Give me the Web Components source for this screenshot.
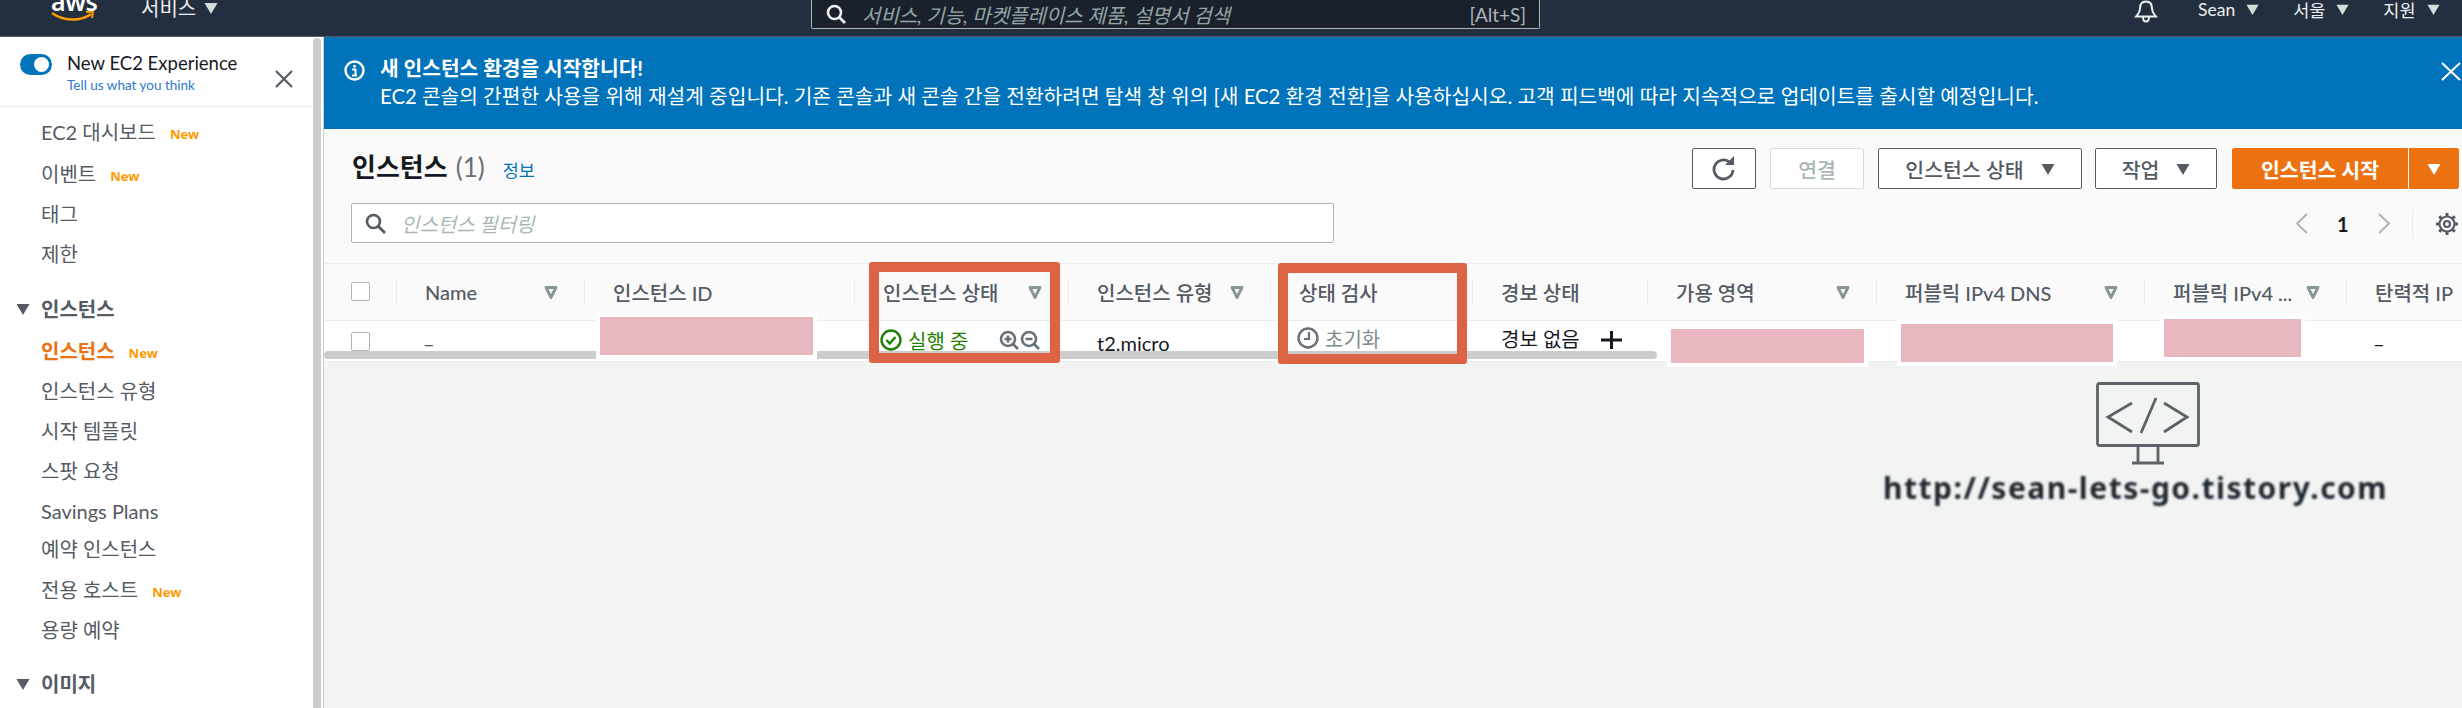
<!DOCTYPE html>
<html lang="ko">
<head>
<meta charset="utf-8">
<title>EC2 인스턴스</title>
<style>
html, body { margin: 0; padding: 0; }
body {
    width: 2462px;
    height: 708px;
    overflow: hidden;
    font-family: Lato, "Noto Sans CJK KR", sans-serif;
    font-size: 20px;
    color: #16191f;
    background: #f2f3f3;
}
.page { display: flex; align-items: stretch; height: 671px; }
</style>
</head>
<body>
<top-bar></top-bar>
<div class="page">
    <side-nav>
        <side-item badge="New">EC2 대시보드</side-item>
        <side-item badge="New" style="margin-top:2px">이벤트</side-item>
        <side-item>태그</side-item>
        <side-item>제한</side-item>
        <side-group style="margin-top:14px">인스턴스</side-group>
        <side-item active badge="New">인스턴스</side-item>
        <side-item>인스턴스 유형</side-item>
        <side-item>시작 템플릿</side-item>
        <side-item>스팟 요청</side-item>
        <side-item style="margin-top:1px">Savings Plans</side-item>
        <side-item style="margin-top:-3px">예약 인스턴스</side-item>
        <side-item badge="New" style="margin-top:1px">전용 호스트</side-item>
        <side-item>용량 예약</side-item>
        <side-group style="margin-top:13px">이미지</side-group>
    </side-nav>
    <main-area>
        <flash-banner></flash-banner>
        <instance-panel></instance-panel>
    </main-area>
</div>
<page-markup></page-markup>

<script>
const CARET = (size, color) => `<svg width="${size}" height="${size}" viewBox="0 0 14 14"><path d="M0.5 2h13L7 13z" fill="${color}"/></svg>`;
const SORT = `<svg width="14" height="15" viewBox="0 0 14 15"><path d="M2 2.500h10L7 12.500z" fill="#f2f3f3" stroke="#879596" stroke-width="2.800" stroke-linejoin="round"/></svg>`;

// small helper, all of the elements here are static markup
function defineStatic(name, html) {
    const tpl = document.createElement('template');
    tpl.innerHTML = html;
    customElements.define(name, class extends HTMLElement {
        constructor() {
            super();
            this.attachShadow({mode: 'open'}).append(tpl.content.cloneNode(true));
        }
    });
}

defineStatic('top-bar', `
<style>
:host { display: block; height: 37px; box-sizing: border-box; background: #232f3e; border-bottom: 1px solid #545b64; overflow: hidden; color: #fff; }
#bar { display: flex; align-items: flex-start; height: 36px; position: relative; }
#left { display: flex; width: 811px; flex: none; }
#logo { margin-left: 51px; width: 43px; height: 36px; position: relative; flex: none; }
#logo span { display: block; font: 600 25px/25px "Noto Sans", sans-serif; margin-top: -11px; letter-spacing: -0.5px; }
#logo svg { position: absolute; left: 0; top: 11px; }
#services { margin-left: 47px; display: flex; align-items: center; gap: 8px; height: 15px; font-size: 20px; color: #eee; }
#search { width: 729px; height: 29px; box-sizing: border-box; background: #1a212c; border: 1px solid #aab7b8; border-top: none; border-radius: 0 0 2px 2px; display: flex; align-items: center; padding: 0 13px 0 14px; flex: none; }
#search svg { margin-right: 16px; flex: none; }
#search i { color: #95a5a6; font-size: 20px; flex: 1; white-space: nowrap; }
#search b { color: #aab7b8; font-weight: 400; font-size: 19px; }
#right { position: absolute; left: 2134px; top: 0; display: flex; align-items: center; height: 19px; font-size: 17.500px; color: #eee; }
.menu { display: flex; align-items: center; gap: 11px; white-space: nowrap; }
</style>
<div id="bar">
    <div id="left">
        <div id="logo"><span>aws</span>
            <svg width="44" height="12" viewBox="0 0 44 12"><path d="M1 2c11 8 28 9 39 1" fill="none" stroke="#f90" stroke-width="2.400"/><path d="M35 1l7-.5-1 6.500" fill="none" stroke="#f90" stroke-width="2"/></svg>
        </div>
        <div id="services">서비스 ${CARET(14, '#d5dbdb')}</div>
    </div>
    <div id="search">
        <svg width="20" height="20" viewBox="0 0 20 20"><circle cx="8.500" cy="8.500" r="6.500" fill="none" stroke="#eee" stroke-width="2.600"/><path d="M13 13l6 6" stroke="#eee" stroke-width="2.800"/></svg>
        <i>서비스, 기능, 마켓플레이스 제품, 설명서 검색</i>
        <b>[Alt+S]</b>
    </div>
    <div id="right">
        <svg width="24" height="23" viewBox="0 0 24 23" style="margin-top:3px"><path d="M12 1.500c-4 0-6 3-6 7 0 4-2 5.500-4 8h20c-2-2.500-4-4-4-8 0-4-2-7-6-7z M9 17c0 6 6 6 6 0" fill="none" stroke="#eee" stroke-width="2"/></svg>
        <div class="menu" style="margin-left:40px">Sean ${CARET(13, '#d5dbdb')}</div>
        <div class="menu" style="margin-left:34px">서울 ${CARET(13, '#d5dbdb')}</div>
        <div class="menu" style="margin-left:34px">지원 ${CARET(13, '#d5dbdb')}</div>
    </div>
</div>`);

defineStatic('side-nav', `
<style>
:host { display: block; width: 324px; flex: none; box-sizing: border-box; background: #fff; border-right: 1px solid #c9d1d2; position: relative; overflow: hidden; }
#head { height: 69px; border-bottom: 1px solid #eaeded; display: flex; position: relative; box-sizing: content-box; }
#toggle { width: 32px; height: 21px; border-radius: 11px; background: #0073bb; margin: 17px 0 0 20px; position: relative; flex: none; }
#toggle::after { content: ""; position: absolute; right: 3px; top: 3px; width: 15px; height: 15px; border-radius: 50%; background: #fff; }
#label { margin: 14px 0 0 15px; }
#label div { font-size: 18.500px; line-height: 24px; color: #16191f; white-space: nowrap; }
#label a { display: block; font-size: 13.500px; line-height: 18px; margin-top: 1px; color: #2e78c7; white-space: nowrap; }
#close { position: absolute; left: 275px; top: 33px; }
#list { padding: 4px 0 0 0; }
#bar { position: absolute; left: 313px; top: 1px; bottom: 0; width: 8px; border-radius: 4px 4px 0 0; background: #cccccc; }
</style>
<div id="head">
    <div id="toggle"></div>
    <div id="label"><div>New EC2 Experience</div><a>Tell us what you think</a></div>
    <svg id="close" width="18" height="18" viewBox="0 0 18 18"><path d="M1 1l16 16M17 1L1 17" stroke="#545b64" stroke-width="2.200"/></svg>
</div>
<div id="list"><slot></slot></div>
<div id="bar"></div>`);

class SideItem extends HTMLElement {
    constructor() {
        super();
        const badge = this.getAttribute('badge');
        this.attachShadow({mode: 'open'}).innerHTML = `
<style>
:host { display: flex; align-items: center; height: 40px; padding-left: 41px; font-size: 20px; color: #545b64; white-space: nowrap; }
:host([active]) { color: #ec7211; font-weight: 700; }
#badge { margin: 5px 0 0 14px; font: 700 13px "Noto Sans", sans-serif; color: #ff9900; }
</style>
<slot></slot>${badge ? `<span id="badge">${badge}</span>` : ''}`;
    }
}
customElements.define('side-item', SideItem);

defineStatic('side-group', `
<style>
:host { display: flex; align-items: center; height: 43px; padding-left: 16px; gap: 11px; font-size: 20px; font-weight: 700; color: #545b64; }
</style>
${CARET(14, '#545b64')}<slot></slot>`);

defineStatic('main-area', `
<style>
:host { display: block; flex: 1; min-width: 0; position: relative; }
</style>
<slot></slot>`);

defineStatic('flash-banner', `
<style>
:host { display: block; height: 92px; background: #0073bb; color: #fff; position: relative; overflow: hidden; }
#wrap { display: flex; padding: 17px 0 0 20px; gap: 15px; }
#text { font-size: 20.300px; line-height: 28px; white-space: nowrap; }
#text b { display: block; font-weight: 700; }
#close { position: absolute; left: 2117px; top: 25px; }
</style>
<div id="wrap">
    <svg width="21" height="21" viewBox="0 0 21 21" style="flex:none;margin-top:6px"><circle cx="10.500" cy="10.500" r="9" fill="none" stroke="#fff" stroke-width="2.400"/><circle cx="10.500" cy="6.300" r="1.500" fill="#fff"/><path d="M8 9.500h3.500v5.500M8 15.500h5" fill="none" stroke="#fff" stroke-width="2"/></svg>
    <div id="text"><b>새 인스턴스 환경을 시작합니다!</b>EC2 콘솔의 간편한 사용을 위해 재설계 중입니다. 기존 콘솔과 새 콘솔 간을 전환하려면 탐색 창 위의 [새 EC2 환경 전환]을 사용하십시오. 고객 피드백에 따라 지속적으로 업데이트를 출시할 예정입니다.</div>
</div>
<svg id="close" width="21" height="19" viewBox="0 0 21 19"><path d="M1 1l18 17M19 1L1 18" stroke="#fff" stroke-width="2"/></svg>`);

defineStatic('action-button', `
<style>
:host { display: flex; align-items: center; justify-content: center; box-sizing: border-box; height: 41px; gap: 17px; border: 1px solid #545b64; border-radius: 2px; background: #fff; color: #545b64; font-size: 20.500px; font-weight: 500; white-space: nowrap; flex: none; }
:host([disabled]) { border-color: #d5dbdb; color: #aab7b8; }
:host([primary]) { background: #ec7211; border-color: #ec7211; color: #fff; font-weight: 700; }
</style>
<slot></slot>`);

defineStatic('instance-panel', `
<style>
:host { display: block; background: #fafafa; position: relative; }
#head { height: 135px; box-sizing: border-box; position: relative; border-bottom: 1px solid #eaeded; }
#title { position: absolute; left: 28px; top: 18px; display: flex; align-items: baseline; white-space: nowrap; }
#title b { font-size: 26px; font-weight: 700; color: #16191f; }
#title span { font-size: 26px; color: #687078; margin-left: 8px; }
#title a { font-size: 17.500px; color: #0073bb; margin-left: 18px; }
#actions { display: flex; position: absolute; left: 1368px; top: 19px; }
#filter { position: absolute; left: 27px; top: 74px; width: 983px; height: 40px; box-sizing: border-box; background: #fff; border: 1px solid #aab7b8; border-radius: 2px; display: flex; align-items: center; padding-left: 13px; gap: 15px; }
#filter i { color: #aab7b8; font-size: 20px; }
#pager { position: absolute; left: 1971px; top: 84px; height: 21px; display: flex; align-items: center; font-size: 20px; font-weight: 700; }
#sep { width: 1px; height: 30px; background: #eaeded; margin: 0 24px 0 21px; }
</style>
<div id="head">
    <div id="title"><b>인스턴스</b><span>(1)</span><a>정보</a></div>
    <div id="actions">
        <action-button style="width:64px"><svg width="26" height="25" viewBox="0 0 26 25"><path d="M19 6.500A9.500 9.500 0 1 0 22 14" fill="none" stroke="#545b64" stroke-width="2.800"/><path d="M14 9h9V0z" fill="#545b64"/></svg></action-button>
        <action-button disabled style="width:94px;margin-left:14px">연결</action-button>
        <action-button style="width:204px;margin-left:14px">인스턴스 상태 ${CARET(14, '#545b64')}</action-button>
        <action-button style="width:122px;margin-left:13px">작업 ${CARET(14, '#545b64')}</action-button>
        <action-button primary style="width:176px;margin-left:15px;border-radius:2px 0 0 2px">인스턴스 시작</action-button>
        <action-button primary style="width:50px;margin-left:1px;border-radius:0 2px 2px 0">${CARET(14, '#fff')}</action-button>
    </div>
    <div id="filter">
        <svg width="21" height="21" viewBox="0 0 21 21"><circle cx="8.500" cy="8.500" r="6.500" fill="none" stroke="#545b64" stroke-width="2.600"/><path d="M13 13l7 7" stroke="#545b64" stroke-width="2.800"/></svg>
        <i>인스턴스 필터링</i>
    </div>
    <div id="pager">
        <svg width="14" height="21" viewBox="0 0 14 21"><path d="M12 1L2 10.500 12 20" fill="none" stroke="#aab7b8" stroke-width="2"/></svg>
        <span style="margin:0 28px">1</span>
        <svg width="14" height="21" viewBox="0 0 14 21"><path d="M2 1l10 9.500L2 20" fill="none" stroke="#aab7b8" stroke-width="2"/></svg>
        <div id="sep"></div>
        <svg width="22" height="22" viewBox="0 0 22 22" style="margin-left:-1px"><g fill="none" stroke="#545b64" stroke-width="2.200"><circle cx="11" cy="11" r="3"/><circle cx="11" cy="11" r="7.500"/><path d="M11 0v3.500M11 18.500V22M0 11h3.500M18.500 11H22M3.200 3.200l2.500 2.500M16.300 16.300l2.500 2.500M18.800 3.200l-2.500 2.500M5.700 16.300l-2.500 2.500" stroke-width="3"/></g></svg>
    </div>
</div>
<instance-table></instance-table>`);

const COLS = [
    ['Name', 188, true], ['인스턴스 ID', 270, false], ['인스턴스 상태', 214, true], ['인스턴스 유형', 202, true],
    ['상태 검사', 202, false], ['경보 상태', 175, false], ['가용 영역', 229, true], ['퍼블릭 IPv4 DNS', 268, true],
    ['퍼블릭 IPv4 ...', 202, true], ['탄력적 IP', 116, false]
];
const GRID = '72px ' + COLS.map(c => c[1] + 'px').join(' ');

class InstanceTable extends HTMLElement {
    constructor() {
        super();
        const heads = COLS.map(c => `<div class="th"><span>${c[0]}</span>${c[2] ? SORT : ''}</div>`).join('');
        this.attachShadow({mode: 'open'}).innerHTML = `
<style>
:host { display: block; position: relative; }
.row { display: grid; grid-template-columns: ${GRID}; width: 2138px; overflow: hidden; }
#header { height: 57px; background: #fafafa; border-bottom: 1px solid #eaeded; box-sizing: border-box; }
#body { height: 41px; background: #fff; border-bottom: 1px solid #eaeded; box-sizing: border-box; overflow: hidden; }
.check { display: flex; padding: 18px 0 0 27px; }
.box { width: 19px; height: 19px; box-sizing: border-box; border: 1px solid #aab7b8; border-radius: 2px; background: #fff; }
.th { display: flex; align-items: center; justify-content: space-between; margin: 14px 0 0 0; height: 28px; padding: 0 26px 0 28px; border-left: 1px solid #eaeded; font-size: 20px; font-weight: 500; color: #545b64; white-space: nowrap; min-width: 0; }
.td { display: flex; align-items: center; padding-left: 29px; height: 40px; font-size: 20px; white-space: nowrap; color: #16191f; }
#bar { position: absolute; left: 0; top: 87px; width: 1333px; height: 8px; border-radius: 4px; background: #cccccc; }
</style>
<div id="header" class="row"><div class="check"><div class="box"></div></div>${heads}</div>
<div id="body" class="row">
    <div class="check" style="padding-top:11px"><div class="box"></div></div>
    <div class="td" style="color:#545b64;margin-top:2px;padding-left:27px">–</div>
    <div class="td"></div>
    <div class="td" style="padding-left:26px;color:#1d8102;margin-top:-1px">
        <svg width="22" height="22" viewBox="0 0 22 22" style="margin-right:6px"><circle cx="11" cy="11" r="9.500" fill="none" stroke="#1d8102" stroke-width="2.400"/><path d="M6.500 11l3.200 3.500 5.800-6.500" fill="none" stroke="#1d8102" stroke-width="2.400"/></svg>실행 중
        <svg width="42" height="20" viewBox="0 0 42 20" style="margin-left:31px"><g fill="none" stroke="#687078" stroke-width="2.600"><circle cx="9" cy="9" r="7"/><path d="M14 14l5 5M5.500 9h7M9 5.500v7"/><circle cx="30" cy="9" r="7"/><path d="M35 14l5 5M26.500 9h7"/></g></svg>
    </div>
    <div class="td" style="margin-top:2px">t2.micro</div>
    <div class="td" style="padding-left:27px;color:#7f8a8c;margin-top:-3px">
        <svg width="22" height="22" viewBox="0 0 22 22" style="margin-right:6px"><circle cx="11" cy="11" r="9.500" fill="none" stroke="#687078" stroke-width="2.400"/><path d="M12 5v7H7" fill="none" stroke="#687078" stroke-width="2.200"/></svg>초기화
    </div>
    <div class="td" style="margin-top:-3px;padding-left:29px">경보 없음
        <svg width="21" height="18" viewBox="0 0 21 18" style="margin-left:21px;margin-top:4px"><path d="M10.500 0v18M0 9h21" stroke="#16191f" stroke-width="3"/></svg>
    </div>
    <div class="td"></div>
    <div class="td"></div>
    <div class="td"></div>
    <div class="td" style="margin-top:2px;padding-left:27px">–</div>
</div>
<div id="bar"></div>`;
    }
}
customElements.define('instance-table', InstanceTable);

// annotations pasted on top of the screenshot: redactions, red boxes, watermark
defineStatic('page-markup', `
<style>
:host { display: block; position: absolute; left: 0; top: 0; width: 2462px; height: 708px; pointer-events: none; }
.mask { position: absolute; background: #e8b7bf; box-shadow: 0 0 0 4px #fff; }
.red { position: absolute; box-sizing: border-box; border: 10px solid #dc6444; border-radius: 3px; }
#mark { position: absolute; left: 2096px; top: 382px; filter: blur(0.4px); }
#url { position: absolute; left: 1883px; top: 468px; font: 700 30px/40px "Noto Sans", sans-serif; letter-spacing: 1.500px; color: #1e2830; filter: blur(0.8px); white-space: nowrap; }
</style>
<div class="mask" style="left:600px;top:317px;width:213px;height:38px"></div>
<div class="mask" style="left:1671px;top:329px;width:193px;height:34px"></div>
<div class="mask" style="left:1901px;top:324px;width:212px;height:38px"></div>
<div class="mask" style="left:2164px;top:319px;width:137px;height:38px"></div>
<div class="red" style="left:869px;top:262px;width:191px;height:101px"></div>
<div class="red" style="left:1278px;top:263px;width:189px;height:101px"></div>
<svg id="mark" width="104" height="84" viewBox="0 0 104 84" fill="none" stroke="#5c6368" stroke-width="2.800">
    <rect x="1.500" y="1.500" width="101" height="62" rx="2"/>
    <path d="M36 21L12 35l24 15M68 21l23 14-23 15M60 16L45 51"/>
    <path d="M42 64v17M62 64v17M36 81h32"/>
</svg>
<div id="url">http://sean-lets-go.tistory.com</div>`);
</script>
</body>
</html>
